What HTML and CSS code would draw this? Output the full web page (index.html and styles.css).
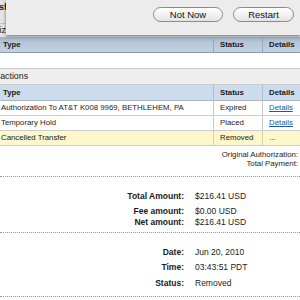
FILE: index.html
```html
<!DOCTYPE html>
<html>
<head>
	<title>Transaction Details</title>
	<link rel="stylesheet" href="styles.css">
</head>
<body>
	<div class="backdrop">
		<div class="backRow">Transfer Funds</div>
		<div class="backRow second">Authorization</div>
		<div class="sheet">
			<button class="pill">Not Now</button>
			<button class="pill">Restart</button>
		</div>
	</div>

	<div class="cols head dark">
		<div class="cell first">Type</div>
		<div class="cell">Status</div>
		<div class="cell">Details</div>
	</div>
	<div class="blank"></div>

	<div class="sectionTitle">Transactions</div>
	<div class="cols head light">
		<div class="cell first">Type</div>
		<div class="cell">Status</div>
		<div class="cell">Details</div>
	</div>
	<div class="cols row">
		<div class="cell first">Authorization To AT&amp;T K008 9969, BETHLEHEM, PA</div>
		<div class="cell">Expired</div>
		<div class="cell"><a href="#">Details</a></div>
	</div>
	<div class="cols row">
		<div class="cell first">Temporary Hold</div>
		<div class="cell">Placed</div>
		<div class="cell"><a href="#">Details</a></div>
	</div>
	<div class="cols row current">
		<div class="cell first">Cancelled Transfer</div>
		<div class="cell">Removed</div>
		<div class="cell">...</div>
	</div>

	<div class="notes">
		<div>Original Authorization:</div>
		<div>Total Payment:</div>
	</div>

	<div class="summary amounts">
		<div class="label">Total Amount:</div><div class="value">$216.41 USD</div>
		<div class="label gap">Fee amount:</div><div class="value gap">$0.00 USD</div>
		<div class="label tight">Net amount:</div><div class="value tight">$216.41 USD</div>
	</div>
	<div class="summary dates">
		<div class="label">Date:</div><div class="value">Jun 20, 2010</div>
		<div class="label gap">Time:</div><div class="value gap">03:43:51 PDT</div>
		<div class="label gap2">Status:</div><div class="value gap2">Removed</div>
	</div>
	<div class="summary end"></div>
</body>
</html>
```

FILE: styles.css
```css
body {
	margin: 0;
	width: 300px;
	height: 300px;
	overflow: hidden;
	background-color: white;
	font-family: "Liberation Sans", Arial, sans-serif;
	font-size: 8.5px;
	color: #1a1a1a;
}
.backdrop {
	position: relative;
	height: 37px;
	background-color: #e4e4e4;
}
.backRow {
	height: 23px;
	line-height: 14px;
	margin-left: -20px;
	font-weight: bold;
	font-size: 9px;
	border-bottom: 1px solid #c4c4c4;
}
.backRow.second {
	height: 13px;
	line-height: 12px;
	margin-left: -27px;
	font-weight: normal;
	border-bottom: 0;
	overflow: hidden;
}
.sheet {
	position: absolute;
	left: 6px;
	top: 0;
	right: 0;
	height: 35px;
	display: flex;
	justify-content: flex-end;
	align-items: flex-start;
	gap: 10px;
	padding: 7px 6px 0 0;
	box-sizing: border-box;
	background-color: #ececec;
	box-shadow: 0 1px 3px rgba(0, 0, 0, 0.55);
}
.pill {
	height: 15px;
	padding: 0;
	font-family: "Liberation Sans", Arial, sans-serif;
	font-size: 9.5px;
	color: #111;
	border: 1px solid #8a8a8a;
	border-radius: 8px;
	background: linear-gradient(#ffffff, #f2f2f2 50%, #e2e2e2);
}
.pill:first-child {
	width: 70px;
}
.pill:last-child {
	width: 61px;
}
.cols {
	display: grid;
	grid-template-columns: 213px 49px 1fr;
	font-size: 7.8px;
}
.cell {
	padding-left: 6px;
	border-left: 1px solid #c8c8c8;
	white-space: nowrap;
	overflow: hidden;
}
.cell.first {
	padding-left: 1px;
	border-left: 0;
}
.head {
	height: 15px;
	line-height: 15px;
	font-weight: bold;
	border-bottom: 1px solid #a9b6c6;
}
.head .first {
	padding-left: 3px;
}
.head.dark {
	background: linear-gradient(#9fb0c4, #b6c6d8 35%, #c3d1e1);
	border-bottom-color: #8c9db2;
}
.head.dark .cell {
	border-left-color: #98a8bc;
}
.head.light {
	background-color: #cddcec;
}
.head.light .cell {
	border-left-color: #b0bfd0;
}
.blank {
	height: 15px;
	border-bottom: 1px solid #cccccc;
}
.sectionTitle {
	height: 15px;
	line-height: 15px;
	margin-left: -22px;
	font-size: 8.8px;
	background-color: #eeeeee;
	border-bottom: 1px solid #cccccc;
}
.row {
	height: 14px;
	line-height: 14px;
	border-bottom: 1px solid #cccccc;
}
.row a {
	color: #24559f;
}
.row.current {
	background-color: #fdf7cc;
	border-bottom-color: #d8d2a8;
}
.row.current .cell {
	border-left-color: #d8d2a8;
}
.notes {
	height: 31px;
	padding-top: 4px;
	box-sizing: border-box;
	text-align: right;
	font-size: 7.8px;
	line-height: 9px;
	padding-right: 2px;
	border-bottom: 1px dotted #9a9a9a;
}
.summary {
	display: grid;
	grid-template-columns: 184px 1fr;
	column-gap: 11px;
	line-height: 10px;
	border-bottom: 1px dotted #9a9a9a;
}
.label {
	text-align: right;
	font-weight: bold;
}
.gap {
	margin-top: 5px;
}
.gap2 {
	margin-top: 6px;
}
.tight {
	margin-top: 1px;
}
.amounts {
	padding-top: 14px;
	padding-bottom: 5px;
}
.dates {
	padding-top: 14px;
	padding-bottom: 8px;
}
.end {
	border-bottom: 0;
}
```
